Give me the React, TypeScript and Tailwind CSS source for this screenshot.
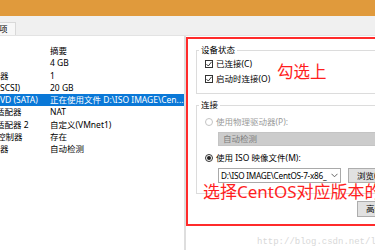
import React from 'react';

interface Row {
  label: string;
  shift: string;
  value: string;
  selected?: boolean;
}

const rows: Row[] = [
  { label: '', shift: '', value: '摘要' },
  { label: '', shift: '', value: '4 GB' },
  { label: '器', shift: '', value: '1' },
  { label: 'SCSI)', shift: '', value: '20 GB' },
  { label: 'VD (SATA)', shift: '', value: '正在使用文件 D:\\ISO IMAGE\\Cen...', selected: true },
  { label: '适配器', shift: '-ml-[4px]', value: 'NAT' },
  { label: '适配器 2', shift: '-ml-[4px]', value: '自定义(VMnet1)' },
  { label: '控制器', shift: '-ml-[3px]', value: '存在' },
  { label: '器', shift: '', value: '自动检测' },
];

const CheckBox: React.FC = () => (
  <span className="w-[8px] h-[8px] border border-[#333] bg-white flex items-center justify-center shrink-0">
    <svg width="6" height="6" viewBox="0 0 6 6">
      <path d="M0.5 3.2 L2.3 5 L5.6 0.8" fill="none" stroke="#222" strokeWidth="0.9" />
    </svg>
  </span>
);

const Radio: React.FC<{ checked?: boolean }> = ({ checked }) => (
  <span
    className={
      checked
        ? 'w-[8px] h-[8px] rounded-full border border-[#333] bg-white flex items-center justify-center shrink-0'
        : 'w-[8px] h-[8px] rounded-full border border-[#c4c4c4] bg-white shrink-0'
    }
  >
    {checked && <span className="w-[4px] h-[4px] rounded-full bg-[#222]" />}
  </span>
);

const App: React.FC = () => {
  return (
    <div
      className="w-[375px] h-[250px] overflow-hidden bg-white text-[8.5px] leading-[12px] text-black"
      style={{ fontFamily: '"Noto Sans", "Noto Sans CJK SC", sans-serif' }}
    >
      <div className="h-[16px] bg-[#e09a3c]" />
      <div className="h-[19px] bg-[#f0f0f0] flex items-end">
        <div className="w-[16px] h-[13px] bg-[#f7f7f7] border-t border-r border-[#d9d9d9] overflow-hidden flex items-center">
          <span className="-ml-[1px] whitespace-nowrap">项</span>
        </div>
      </div>

      <div className="flex h-[215px] border-t border-[#e3e3e3]">
        {/* device list */}
        <div className="w-[186px] shrink-0 border-r-2 border-[#dedede] overflow-hidden pt-[9px]">
          {rows.map((r, i) => (
            <div
              key={i}
              className={
                r.selected
                  ? 'h-[12.25px] flex items-center whitespace-nowrap bg-[#0a78d7] text-white'
                  : 'h-[12.25px] flex items-center whitespace-nowrap'
              }
            >
              <div className="w-[50px] shrink-0 overflow-hidden">
                <span className={'block ' + r.shift}>{r.label}</span>
              </div>
              <span>{r.value}</span>
            </div>
          ))}
        </div>

        {/* settings page */}
        <div className="relative flex-1 min-w-0">
          <div className="mt-[1px] h-[189px] w-[220px] border-2 border-r-0 border-[#ff2b2b] pl-[8px] pt-[11px] flex flex-col items-start">
            <div className="relative h-[44px] w-[220px] shrink-0 border border-r-0 border-[#dcdcdc] pl-[8px] pt-[7px] flex flex-col gap-[3px]">
              <span className="absolute -top-[7px] left-[2px] bg-white px-[2px]">设备状态</span>
              <div className="h-[12px] flex items-center gap-[3px]">
                <CheckBox />
                <span>已连接(C)</span>
              </div>
              <div className="h-[12px] flex items-center gap-[3px]">
                <CheckBox />
                <span>启动时连接(O)</span>
              </div>
            </div>

            <div className="relative mt-[11px] h-[89px] w-[220px] shrink-0 border border-r-0 border-[#dcdcdc] pl-[8px] pt-[10px] flex flex-col">
              <span className="absolute -top-[7px] left-[2px] bg-white px-[2px]">连接</span>
              <div className="h-[12px] flex items-center gap-[3px] text-[#9a9a9a]">
                <Radio />
                <span>使用物理驱动器(P):</span>
              </div>
              <div className="mt-[4px] ml-[13px] h-[14px] w-[200px] bg-[#cccccc] border border-[#c4c4c4] pl-[4px] flex items-center text-[#7d7d7d]">
                自动检测
              </div>
              <div className="mt-[6px] h-[12px] flex items-center gap-[3px]">
                <Radio checked />
                <span>使用 ISO 映像文件(M):</span>
              </div>
              <div className="mt-[4px] ml-[13px] flex gap-[7px]">
                <div className="w-[123px] h-[15px] shrink-0 bg-white border border-[#a9a9a9] pl-[2px] pr-[2px] flex items-center justify-between whitespace-nowrap overflow-hidden text-[8.2px] tracking-[-0.25px]">
                  <span>D:\ISO IMAGE\CentOS-7-x86_</span>
                  <svg width="7" height="5" viewBox="0 0 7 5" className="shrink-0">
                    <path d="M0.5 0.8 L3.5 3.8 L6.5 0.8" fill="none" stroke="#555" strokeWidth="0.9" />
                  </svg>
                </div>
                <div className="w-[60px] h-[15px] shrink-0 bg-[#e1e1e1] border border-[#adadad] pl-[8px] flex items-center whitespace-nowrap">
                  浏览(B)...
                </div>
              </div>
            </div>

            <div className="mt-[7px] ml-[161px] w-[60px] h-[16px] shrink-0 bg-[#e1e1e1] border border-[#adadad] pl-[8px] flex items-center whitespace-nowrap">
              高级(V)...
            </div>
          </div>

          <div
            className="mt-[10px] pl-[71px] whitespace-nowrap text-[9px] leading-[12px] text-[#d8d8d8]"
            style={{ fontFamily: '"Liberation Mono", monospace' }}
          >
            http://blog.csdn.net/l
          </div>

          {/* annotations */}
          <span className="absolute left-[91px] top-[27px] text-[16.5px] leading-[18px] text-[#ff1e1e] whitespace-nowrap">
            勾选上
          </span>
          <span className="absolute left-[17px] top-[147px] text-[17px] leading-[18px] text-[#ff1e1e] whitespace-nowrap">
            选择CentOS对应版本的ISO
          </span>
        </div>
      </div>
    </div>
  );
};

export default App;
